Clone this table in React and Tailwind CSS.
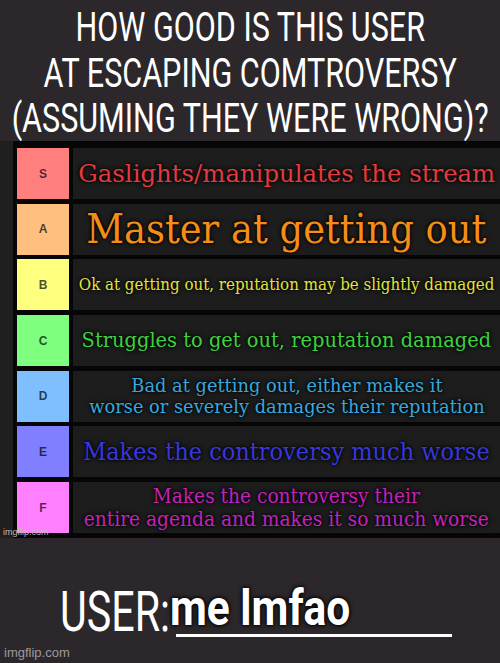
import React from 'react'

const tiers = [
  { label: 'S', bg: 'bg-[#ff7f7f]', color: 'text-[#e23b3f]', size: 'text-[25px] scale-x-[0.975]', lead: 'leading-[1.2]', lines: ['Gaslights/manipulates the stream'] },
  { label: 'A', bg: 'bg-[#ffbf7f]', color: 'text-[#f58d17]', size: 'text-[41px] scale-x-[0.9]', lead: 'leading-[1.2]', lines: ['Master at getting out'] },
  { label: 'B', bg: 'bg-[#ffff7f]', color: 'text-[#e3e33b]', size: 'text-[17.5px] scale-x-[0.86]', lead: 'leading-[1.2]', lines: ['Ok at getting out, reputation may be slightly damaged'] },
  { label: 'C', bg: 'bg-[#7fff7f]', color: 'text-[#3fd13f]', size: 'text-[21px] scale-x-[0.925]', lead: 'leading-[1.2]', lines: ['Struggles to get out, reputation damaged'] },
  { label: 'D', bg: 'bg-[#7fbfff]', color: 'text-[#37a8de]', size: 'text-[19px] scale-x-[0.937]', lead: 'leading-[21px]', lines: ['Bad at getting out, either makes it', 'worse or severely damages their reputation'] },
  { label: 'E', bg: 'bg-[#7f7fff]', color: 'text-[#3838dc]', size: 'text-[23.5px] scale-x-[0.957]', lead: 'leading-[1.2]', lines: ['Makes the controversy much worse'] },
  { label: 'F', bg: 'bg-[#ff7fff]', color: 'text-[#c322bd]', size: 'text-[19.5px] scale-x-[0.954]', lead: 'leading-[23px]', lines: ['Makes the controversy their', 'entire agenda and makes it so much worse'] },
]

function TierRow({ tier }) {
  return (
    <div className="flex h-[51px] gap-[4px]">
      <div className={`w-[52px] shrink-0 flex items-center justify-center ${tier.bg}`}>
        <span className="text-[12px] font-bold text-black/70 font-['Liberation_Sans',sans-serif]">{tier.label}</span>
      </div>
      <div className="flex-1 min-w-0 bg-[#1d1d1d] flex items-center justify-center">
        <div className={`shrink-0 w-max whitespace-nowrap text-center font-['DejaVu_Serif',serif] [text-shadow:0_0_3px_#000,0_0_5px_#000] ${tier.lead} ${tier.color} ${tier.size}`}>
          {tier.lines.map((l) => (
            <div key={l}>{l}</div>
          ))}
        </div>
      </div>
    </div>
  )
}

export default function App() {
  return (
    <div className="w-[500px] h-[663px] bg-[#2c272b] flex flex-col overflow-hidden">
      {/* title */}
      <div className="h-[141px] pt-[5px] shrink-0 flex justify-center">
        <div className="w-max shrink-0 scale-x-[0.745] text-center text-white text-[41px] leading-[45.5px] font-['Roboto',sans-serif] whitespace-nowrap">
          <div>HOW GOOD IS THIS USER</div>
          <div>AT ESCAPING COMTROVERSY</div>
          <div>(ASSUMING THEY WERE WRONG)?</div>
        </div>
      </div>

      {/* tier list */}
      <div className="relative h-[397px] shrink-0 bg-[#060606] flex">
        <div className="w-[13px] bg-[#1f1f1f]" />
        <div className="flex-1 min-w-0 pl-[4px] pt-[7px] flex flex-col gap-[4.7px]">
          {tiers.map((t) => (
            <TierRow key={t.label} tier={t} />
          ))}
        </div>
        <span className="absolute left-[3px] bottom-[1px] text-[9px] leading-none text-[#bdbdbd] font-['Liberation_Sans',sans-serif]">
          imgflip.com
        </span>
      </div>

      {/* user line */}
      <div className="flex-1 flex flex-col pt-[45px]">
        <div className="flex items-start pl-[60px]">
          <div className="mt-[2px] text-white text-[55px] leading-[55px] font-['Roboto',sans-serif] scale-x-[0.75] origin-left w-[110px] whitespace-nowrap">
            USER:
          </div>
          <div className="flex flex-col">
            <div className="text-white font-bold text-[50px] leading-[50px] font-['Roboto',sans-serif] whitespace-nowrap [text-shadow:0_0_4px_#000,0_0_6px_#000] scale-x-[0.85] origin-left">
              me lmfao
            </div>
            <div className="ml-[6px] mt-[1px] h-[3px] w-[276px] bg-white" />
          </div>
        </div>
        <div className="mt-auto pl-[4px] pb-[3px] text-[13px] leading-[15px] text-[#9e999d] font-['Liberation_Sans',sans-serif]">
          imgflip.com
        </div>
      </div>
    </div>
  )
}
